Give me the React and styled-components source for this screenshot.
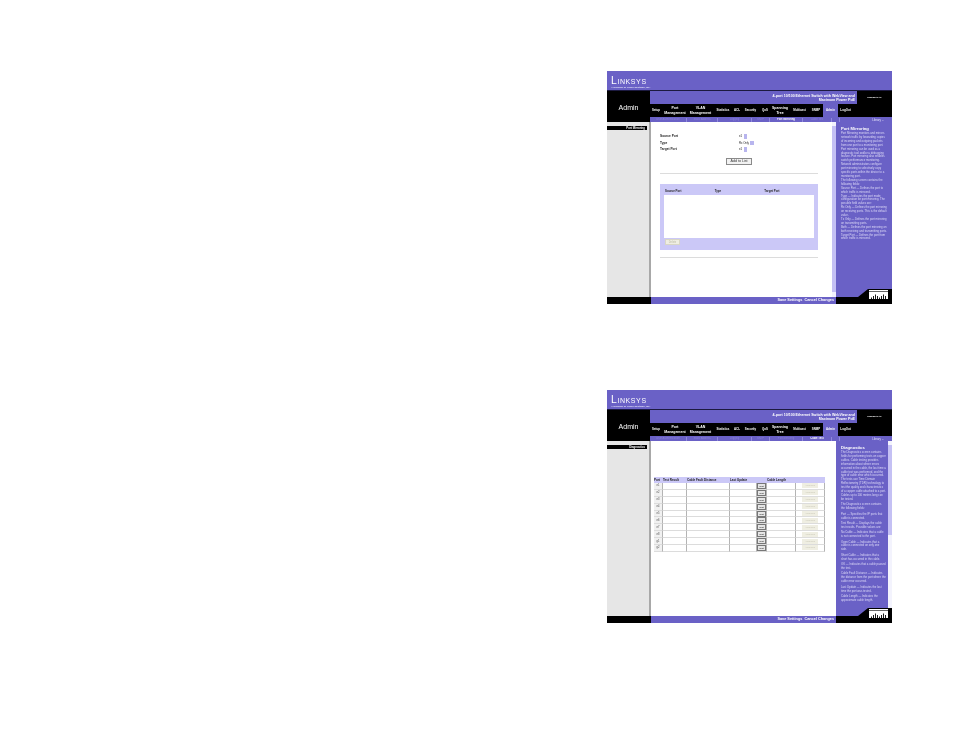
import React from "react";
import styled, { createGlobalStyle } from "styled-components";

const GlobalStyle = createGlobalStyle`
  html, body { margin: 0; padding: 0; background: #fff; }
  body { font-family: "Liberation Sans", Arial, sans-serif; }
`;

const PURPLE = "#6a61c6";
const LILAC = "#cbc8f7";

const NAV = [
  { label: "Setup", w: 12 },
  { label: "Port Management", w: 26, big: true },
  { label: "VLAN Management", w: 25, big: true },
  { label: "Statistics", w: 20 },
  { label: "ACL", w: 8 },
  { label: "Security", w: 19 },
  { label: "QoS", w: 10 },
  { label: "Spanning Tree", w: 20, big: true },
  { label: "Multicast", w: 19 },
  { label: "SNMP", w: 14 },
  { label: "Admin", w: 15, active: true },
  { label: "LogOut", w: 15 },
];

const SUB = [
  { label: "User Authentication", w: 37 },
  { label: "Static Address", w: 31 },
  { label: "Logging", w: 34 },
  { label: "SNTP", w: 18 },
  { label: "Port Mirroring", w: 33 },
  { label: "Cable Test", w: 29 },
  { label: "", w: 8 },
];

const MIRROR_HELP = [
  "Port Mirroring monitors and mirrors network traffic by forwarding copies of incoming and outgoing packets from one port to a monitoring port. Port mirroring can be used as a diagnostic tool and/or a debugging feature. Port mirroring also enables switch performance monitoring.",
  "Network administrators configure port mirroring to selectively copy specific ports within the device to a monitoring port.",
  "The following screen contains the following fields:",
  "Source Port — Defines the port to which traffic is mirrored.",
  "Type — Indicates the port mode configuration for port mirroring. The possible field values are:",
  "Rx Only — Defines the port mirroring on receiving ports. This is the default value.",
  "Tx Only — Defines the port mirroring on transmitting ports.",
  "Both — Defines the port mirroring on both receiving and transmitting ports.",
  "Target Port — Defines the port from which traffic is mirrored.",
];

const DIAG_HELP = [
  "The Diagnostics screen contains fields for performing tests on copper cables. Cable testing provides information about where errors occurred in the cable, the last time a cable test was performed, and the type of cable error which occurred. The tests use Time Domain Reflectometry (TDR) technology to test the quality and characteristics of a copper cable attached to a port. Cables up to 100 meters long can be tested.",
  "The Diagnostics screen contains the following fields:",
  "Port — Specifies the IP ports that cable is connected.",
  "Test Result — Displays the cable test results. Possible values are:",
  "No Cable — Indicates that a cable is not connected to the port.",
  "Open Cable — Indicates that a cable is connected on only one side.",
  "Short Cable — Indicates that a short has occurred in the cable.",
  "OK — Indicates that a cable passed the test.",
  "Cable Fault Distance — Indicates the distance from the port where the cable error occurred.",
  "Last Update — Indicates the last time the port was tested.",
  "Cable Length — Indicates the approximate cable length.",
];

const DIAG_COLS = ["Port", "Test Result", "Cable Fault Distance", "Last Update", "", "Cable Length", ""];
const DIAG_ROWS = ["e1", "e2", "e3", "e4", "e5", "e6", "e7", "e8", "g1", "g2"];

const Page = styled.div`
  display: flex;
  flex-direction: column;
  gap: 86px;
  width: 954px;
  height: 738px;
  box-sizing: border-box;
  padding: 71px 0 0 607px;
  overflow: hidden;
`;

const Panel = styled.div`
  display: flex;
  flex-direction: column;
  width: 285px;
  height: 233px;
  background: #fff;
  position: relative;
  filter: blur(0.3px);
`;

const Banner = styled.div`
  height: 20px;
  flex: none;
  box-sizing: border-box;
  padding: 5px 0 0 4px;
  background: ${PURPLE};
  border-bottom: 1px solid #1c1a40;
  color: #fff;
`;

const LogoWord = styled.div`
  font-size: 10.4px;
  line-height: 10px;
  letter-spacing: 0.6px;
  font-variant: small-caps;
`;

const LogoSub = styled.div`
  font-size: 2.5px;
  line-height: 3px;
  color: #e4e2fa;
  font-weight: bold;
`;

const Header = styled.div`
  display: flex;
  height: 31px;
  flex: none;
`;

const AdminCell = styled.div`
  width: 43px;
  flex: none;
  background: #000;
  color: #fff;
  font-size: 7px;
  text-align: center;
  padding-top: 13px;
  box-sizing: border-box;
`;

const HeaderMain = styled.div`
  flex: 1;
  display: flex;
  flex-direction: column;
`;

const TopRow = styled.div`
  display: flex;
  height: 26px;
  background: #000;
`;

const TitleStack = styled.div`
  width: 207px;
  flex: none;
  display: flex;
  flex-direction: column;
`;

const Title = styled.div`
  height: 13px;
  background: ${PURPLE};
  color: #fff;
  font-size: 3.6px;
  line-height: 4.2px;
  font-weight: bold;
  text-align: right;
  padding: 3px 2px 0 0;
  box-sizing: border-box;
`;

const Nav = styled.div`
  height: 13px;
  display: flex;
  background: #000;
`;

const NavItem = styled.div`
  width: ${(p) => p.$w}px;
  flex: none;
  display: flex;
  align-items: center;
  justify-content: center;
  text-align: center;
  color: #fff;
  font-size: ${(p) => (p.$big ? 3.5 : 2.9)}px;
  line-height: ${(p) => (p.$big ? 4.2 : 3.6)}px;
  font-weight: bold;
  background: ${(p) => (p.$active ? PURPLE : "#000")};
`;

const ProductTag = styled.div`
  flex: 1;
  color: #fff;
  font-size: 2.4px;
  font-weight: bold;
  text-align: center;
  padding-top: 5px;
`;

const SubNav = styled.div`
  flex: 1;
  display: flex;
  align-items: center;
  background: ${PURPLE};
  white-space: nowrap;
`;

const SubItem = styled.div`
  width: ${(p) => p.$w}px;
  flex: none;
  box-sizing: border-box;
  border-right: 0.5px solid #8f88dc;
  text-align: center;
  overflow: hidden;
  font-size: 2.7px;
  line-height: 4px;
  min-height: 4px;
  color: ${(p) => (p.$active ? "#fff" : "#8a83d8")};
  font-weight: ${(p) => (p.$active ? "bold" : "normal")};
`;

const LibraryLink = styled.div`
  flex: 1;
  text-align: right;
  padding-right: 8px;
  font-size: 2.8px;
  color: #e4e2fa;
`;

const Body = styled.div`
  flex: 1;
  display: flex;
  min-height: 0;
`;

const SideCol = styled.div`
  width: 44px;
  flex: none;
  box-sizing: border-box;
  padding-top: 4px;
  background: #e6e6e6;
  border-right: 2px solid #a8a8a8;
`;

const SideTag = styled.div`
  width: 40px;
  height: 4px;
  background: #000;
  color: #fff;
  font-size: 2.8px;
  line-height: 4px;
  font-weight: bold;
  text-align: right;
  padding-right: 2px;
  box-sizing: border-box;
`;

const Main = styled.div`
  flex: 1;
  min-width: 0;
`;

const Help = styled.div`
  width: 56px;
  flex: none;
  display: flex;
  background: ${PURPLE};
  overflow: hidden;
`;

const HelpText = styled.div`
  flex: 1;
  min-width: 0;
  box-sizing: border-box;
  padding: ${(p) => (p.$bar ? "4px 2px 0 5px" : "4px 5px 0 5px")};
  color: #dedbf8;
  font-size: 2.8px;
  line-height: 3.9px;
`;

const HelpTitle = styled.div`
  font-size: 4.2px;
  line-height: 6px;
  font-weight: bold;
  color: #fff;
`;

const HelpPara = styled.p`
  margin: 0 0 ${(p) => (p.$bar ? 1.5 : 0)}px;
`;

const Scrollbar = styled.div`
  width: 4px;
  flex: none;
  position: relative;
  background: #f3f3fd;
  &::after {
    content: "";
    position: absolute;
    left: 0;
    right: 0;
    top: ${(p) => p.$top}px;
    height: ${(p) => p.$h}px;
    background: #c4c0f4;
  }
`;

const MirrorMain = styled.div`
  display: flex;
  height: 100%;
`;

const MirrorContent = styled.div`
  flex: 1;
  min-width: 0;
  box-sizing: border-box;
  padding: 11px 14px 0 9px;
`;

const FormRow = styled.div`
  display: flex;
  align-items: center;
  height: 6.5px;
  font-size: 3.2px;
  font-weight: bold;
  color: #222;
`;

const FormLabel = styled.div`
  width: 79px;
`;

const SelectBox = styled.div`
  display: flex;
  align-items: center;
  gap: 1.5px;
  font-size: 2.8px;
  font-weight: normal;
`;

const SelectArrow = styled.span`
  width: 3.5px;
  height: 4.5px;
  background: #b8b5ee;
`;

const ButtonRow = styled.div`
  display: flex;
  justify-content: center;
  margin-top: 5px;
`;

const AddButton = styled.div`
  width: 26px;
  height: 7px;
  box-sizing: border-box;
  border: 1px solid #8a8a8a;
  background: #f2f2f2;
  font-size: 3.6px;
  line-height: 5px;
  text-align: center;
  color: #333;
`;

const Rule = styled.div`
  height: 1px;
  background: #dcdcdc;
  margin-top: ${(p) => p.$top}px;
`;

const ListBox = styled.div`
  height: 66px;
  margin-top: 10px;
  box-sizing: border-box;
  padding: 5px 4px 0;
  background: ${LILAC};
  display: flex;
  flex-direction: column;
`;

const ListHead = styled.div`
  display: flex;
  height: 6px;
  padding-left: 1px;
  font-size: 2.9px;
  font-weight: bold;
  color: #222;
`;

const ListHeadCell = styled.div`
  width: 50px;
`;

const ListArea = styled.div`
  height: 43px;
  background: #fff;
`;

const DeleteButton = styled.div`
  width: 15px;
  height: 6px;
  margin: 1px 0 0 1px;
  background: #efeee2;
  border: 0.5px solid #d8d6c6;
  box-sizing: border-box;
  font-size: 2.6px;
  line-height: 5px;
  text-align: center;
  color: #bbb9a5;
`;

const DiagContent = styled.div`
  box-sizing: border-box;
  padding: 36px 10px 0 3px;
`;

const DiagTable = styled.div`
  display: grid;
  grid-template-columns: 9px 24px 43px 27px 10px 29px 29px;
  width: 171px;
  background: #fff;
`;

const DiagHead = styled.div`
  height: 6px;
  background: ${LILAC};
  font-size: 3px;
  line-height: 6px;
  font-weight: bold;
  white-space: nowrap;
  color: #222;
`;

const DiagCell = styled.div`
  height: 6.9px;
  box-sizing: border-box;
  border-bottom: 0.5px solid #dcdcdc;
  border-right: 0.5px solid #b4b4b4;
  display: flex;
  align-items: center;
  justify-content: center;
  font-size: 2.6px;
  color: #444;
  background: ${(p) => (p.$first ? "#f1f1f1" : "#fff")};
`;

const TestButton = styled.div`
  width: 9px;
  height: 6px;
  box-sizing: border-box;
  border: 0.5px solid #777;
  background: #e6e6e6;
  font-size: 2.5px;
  line-height: 5px;
  text-align: center;
  color: #222;
`;

const AdvancedButton = styled.div`
  width: 16px;
  height: 5px;
  background: #efeee2;
  font-size: 2.3px;
  line-height: 5px;
  text-align: center;
  color: #c8c6b4;
`;

const Footer = styled.div`
  display: flex;
  height: 7px;
  flex: none;
`;

const FooterLeft = styled.div`
  width: 44px;
  flex: none;
  background: #000;
`;

const FooterMid = styled.div`
  flex: 1;
  background: ${PURPLE};
  color: #fff;
  font-size: 3.8px;
  line-height: 7px;
  font-weight: bold;
  text-align: right;
  white-space: nowrap;
  padding-right: 2px;
`;

const FooterRight = styled.div`
  width: 56px;
  flex: none;
  background: #000;
`;

const CiscoBadge = styled.svg`
  position: absolute;
  right: 0;
  bottom: 5px;
  width: 34px;
  height: 11px;
  display: block;
`;

const Cisco = () => (
  <CiscoBadge viewBox="0 0 34 11">
    <path d="M0 11 V9 L10 1 H34 V11 Z" fill="#000" />
    <rect x="11" y="2" width="19" height="9" fill="#fff" />
    <path d="M11 3.5H30" stroke="#000" strokeWidth="0.6" />
    <path
      d="M13.5 11V9.5M15.5 11V8M17.5 11V6.5M19.5 11V8M21.5 11V9.5M23.5 11V8M25.5 11V6.5M27.5 11V8"
      stroke="#000"
      strokeWidth="0.9"
    />
  </CiscoBadge>
);

const Frame = ({ sideLabel, activeSub, helpTitle, help, helpBar, children }) => (
  <Panel>
    <Banner>
      <LogoWord>Linksys</LogoWord>
      <LogoSub>A Division of Cisco Systems, Inc.</LogoSub>
    </Banner>
    <Header>
      <AdminCell>Admin</AdminCell>
      <HeaderMain>
        <TopRow>
          <TitleStack>
            <Title>
              4-port 10/100 Ethernet Switch with WebView and
              <br />
              Maximum Power PoE
            </Title>
            <Nav>
              {NAV.map((n) => (
                <NavItem key={n.label} $w={n.w} $big={n.big} $active={n.active}>
                  {n.label}
                </NavItem>
              ))}
            </Nav>
          </TitleStack>
          <ProductTag>SRW224G4P</ProductTag>
        </TopRow>
        <SubNav>
          {SUB.map((s) => (
            <SubItem key={s.label} $w={s.w} $active={s.label === activeSub}>
              {s.label}
            </SubItem>
          ))}
          <LibraryLink>Library ...</LibraryLink>
        </SubNav>
      </HeaderMain>
    </Header>
    <Body>
      <SideCol>
        <SideTag>{sideLabel}</SideTag>
      </SideCol>
      <Main>{children}</Main>
      <Help>
        <HelpText $bar={helpBar}>
          <HelpTitle>{helpTitle}</HelpTitle>
          {help.map((h) => (
            <HelpPara key={h} $bar={helpBar}>
              {h}
            </HelpPara>
          ))}
        </HelpText>
        {helpBar && <Scrollbar $top={4} $h={90} />}
      </Help>
    </Body>
    <Footer>
      <FooterLeft />
      <FooterMid>Save Settings&nbsp; Cancel Changes</FooterMid>
      <FooterRight />
    </Footer>
    <Cisco />
  </Panel>
);

const App = () => (
  <>
    <GlobalStyle />
    <Page>
      <Frame
        sideLabel="Port Mirroring"
        activeSub="Port Mirroring"
        helpTitle="Port Mirroring"
        help={MIRROR_HELP}
      >
        <MirrorMain>
          <MirrorContent>
            <FormRow>
              <FormLabel>Source Port</FormLabel>
              <SelectBox>
                e1
                <SelectArrow />
              </SelectBox>
            </FormRow>
            <FormRow>
              <FormLabel>Type</FormLabel>
              <SelectBox>
                Rx Only
                <SelectArrow />
              </SelectBox>
            </FormRow>
            <FormRow>
              <FormLabel>Target Port</FormLabel>
              <SelectBox>
                e1
                <SelectArrow />
              </SelectBox>
            </FormRow>
            <ButtonRow>
              <AddButton>Add to List</AddButton>
            </ButtonRow>
            <Rule $top={8} />
            <ListBox>
              <ListHead>
                <ListHeadCell>Source Port</ListHeadCell>
                <ListHeadCell>Type</ListHeadCell>
                <ListHeadCell>Target Port</ListHeadCell>
              </ListHead>
              <ListArea />
              <DeleteButton>Delete</DeleteButton>
            </ListBox>
            <Rule $top={7} />
          </MirrorContent>
          <Scrollbar $top={4} $h={166} />
        </MirrorMain>
      </Frame>
      <Frame
        sideLabel="Diagnostics"
        activeSub="Cable Test"
        helpTitle="Diagnostics"
        help={DIAG_HELP}
        helpBar
      >
        <DiagContent>
          <DiagTable>
            {DIAG_COLS.map((c, i) => (
              <DiagHead key={i}>{c}</DiagHead>
            ))}
            {DIAG_ROWS.map((r) => (
              <React.Fragment key={r}>
                <DiagCell $first>{r}</DiagCell>
                <DiagCell />
                <DiagCell />
                <DiagCell />
                <DiagCell>
                  <TestButton>Test</TestButton>
                </DiagCell>
                <DiagCell />
                <DiagCell>
                  <AdvancedButton>Advanced</AdvancedButton>
                </DiagCell>
              </React.Fragment>
            ))}
          </DiagTable>
        </DiagContent>
      </Frame>
    </Page>
  </>
);

export default App;
